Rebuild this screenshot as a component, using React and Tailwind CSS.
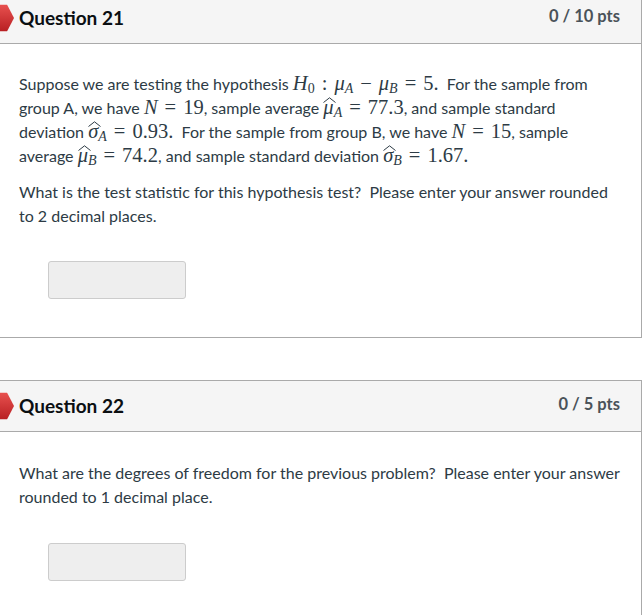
import React from "react";

const mathFont = { fontFamily: '"Liberation Serif", "DejaVu Serif", serif' };

function Marker() {
  return (
    <svg width="14" height="27" viewBox="0 0 14 27" className="absolute left-0 top-1/2 -translate-y-1/2">
      <defs>
        <linearGradient id="mk" x1="0" y1="0" x2="0" y2="1">
          <stop offset="0" stopColor="#e8514f" />
          <stop offset="1" stopColor="#b81f22" />
        </linearGradient>
      </defs>
      <polygon points="0,0 7,0 14,13.5 7,27 0,27" fill="url(#mk)" />
    </svg>
  );
}

function M({ children }) {
  return (
    <span className="text-[20.5px] leading-none" style={mathFont}>
      {children}
    </span>
  );
}

function V({ children }) {
  return <span className="italic">{children}</span>;
}

function Sub({ children, up }) {
  return (
    <sub className={`text-[14px] relative top-[3px] ${up ? "" : "italic"}`}>{children}</sub>
  );
}

function Op({ children }) {
  return <span className="mx-[7px]">{children}</span>;
}

function Hat({ children }) {
  return (
    <span className="relative inline-block italic">
      <svg width="13" height="6" viewBox="0 0 13 6" className="absolute left-[0px] top-[0px]">
        <path d="M0.5 5.5 L6.5 0.8 L12.5 5.5" fill="none" stroke="#2d3b45" strokeWidth="1" />
      </svg>
      {children}
    </span>
  );
}

function Header({ title, pts }) {
  return (
    <div className="relative flex justify-between items-start bg-[#f5f5f5] border-b border-[#aaaaaa] h-[51px] pl-[19px] pr-[21px]">
      <Marker />
      <h2 className="text-[19px] font-bold text-[#0b0f12] pt-[12px] leading-[26px]">{title}</h2>
      <div className="text-[16.5px] font-bold text-[#4a5259] pt-[11px] leading-[24px]">{pts}</div>
    </div>
  );
}

function AnswerBox() {
  return <div className="ml-[29px] w-[138px] h-[38px] bg-[#eeeeee] border border-[#cccccc] rounded-[3px]" />;
}

export default function App() {
  return (
    <div
      className="bg-white w-[643px] h-[615px] overflow-hidden text-[#2d3b45]"
      style={{ fontFamily: 'Lato, "Liberation Sans", sans-serif' }}
    >
      <div className="-mt-[8px] w-[642px] border-y border-r border-[#aaaaaa]">
        <Header title="Question 21" pts="0 / 10 pts" />
        <div className="px-[19px] pt-[28px] pb-[38px] text-[16px] leading-[24px] whitespace-nowrap">
          <div>
            Suppose we are testing the hypothesis{" "}
            <M>
              <V>H</V>
              <Sub up>0</Sub>
              <Op>:</Op>
              <V>μ</V>
              <Sub>A</Sub>
              <Op>−</Op>
              <V>μ</V>
              <Sub>B</Sub>
              <Op>=</Op>5.
            </M>
            &nbsp; For the sample from
          </div>
          <div>
            group A, we have{" "}
            <M>
              <V>N</V>
              <Op>=</Op>19
            </M>
            , sample average{" "}
            <M>
              <Hat>μ</Hat>
              <Sub>A</Sub>
              <Op>=</Op>77.3
            </M>
            , and sample standard
          </div>
          <div>
            deviation{" "}
            <M>
              <Hat>σ</Hat>
              <Sub>A</Sub>
              <Op>=</Op>0.93.
            </M>
            &nbsp; For the sample from group B, we have{" "}
            <M>
              <V>N</V>
              <Op>=</Op>15
            </M>
            , sample
          </div>
          <div>
            average{" "}
            <M>
              <Hat>μ</Hat>
              <Sub>B</Sub>
              <Op>=</Op>74.2
            </M>
            , and sample standard deviation{" "}
            <M>
              <Hat>σ</Hat>
              <Sub>B</Sub>
              <Op>=</Op>1.67.
            </M>
          </div>
          <div className="mt-[12px]">
            What is the test statistic for this hypothesis test?&nbsp; Please enter your answer rounded
          </div>
          <div>to 2 decimal places.</div>
          <div className="mt-[33px]">
            <AnswerBox />
          </div>
        </div>
      </div>

      <div className="mt-[42px] w-[642px] border-t border-r border-[#aaaaaa] h-[300px]">
        <Header title="Question 22" pts="0 / 5 pts" />
        <div className="px-[19px] pt-[29px] text-[16px] leading-[24px] whitespace-nowrap">
          <div>What are the degrees of freedom for the previous problem?&nbsp; Please enter your answer</div>
          <div>rounded to 1 decimal place.</div>
          <div className="mt-[34px]">
            <AnswerBox />
          </div>
        </div>
      </div>
    </div>
  );
}
